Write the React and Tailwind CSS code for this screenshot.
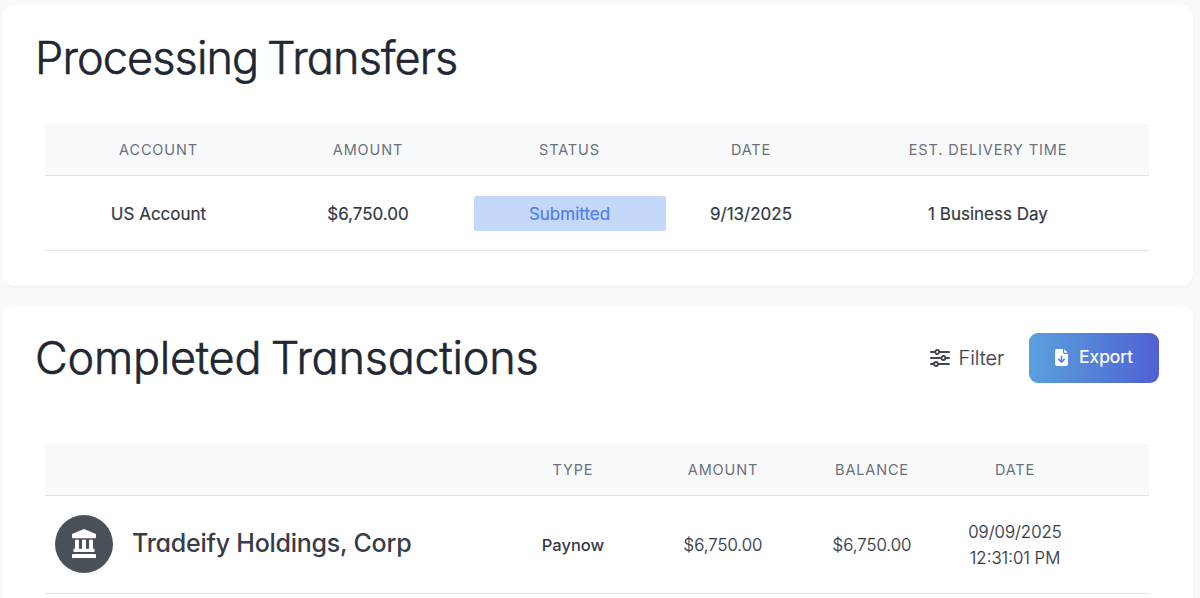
import React from 'react';

const transfers = [
    { id: 1, account: 'US Account', amount: '$6,750.00', status: 'Submitted', date: '9/13/2025', delivery: '1 Business Day' },
];

const transactions = [
    { id: 1, name: 'Tradeify Holdings, Corp', type: 'Paynow', amount: '$6,750.00', balance: '$6,750.00', date: '09/09/2025', time: '12:31:01 PM' },
];

function FilterIcon() {
    return (
        <svg width="20" height="18" viewBox="0 0 20 18" fill="none" stroke="currentColor" strokeWidth="2" strokeLinecap="round">
            <path d="M1 3h4M9.4 3H19M1 9h10.2M15.6 9H19M1 15h3M8.2 15H19" />
            <circle cx="7.2" cy="3" r="2" strokeWidth="1.8" />
            <circle cx="13.4" cy="9" r="2" strokeWidth="1.8" />
            <circle cx="6" cy="15" r="2" strokeWidth="1.8" />
        </svg>
    );
}

function FileDownloadIcon() {
    return (
        <svg width="13" height="17" viewBox="0 0 13 17">
            <path d="M2 0h6v3.6c0 .8.6 1.4 1.4 1.4H13v10a2 2 0 0 1-2 2H2a2 2 0 0 1-2-2V2a2 2 0 0 1 2-2z" fill="#fff" />
            <path d="M9.2 0.2 12.8 3.8H9.2z" fill="#fff" />
            <path d="M6.5 7.2v5.6M3.8 10.4l2.7 2.7 2.7-2.7" fill="none" stroke="#5585d8" strokeWidth="1.6" strokeLinecap="round" strokeLinejoin="round" />
        </svg>
    );
}

function BankIcon() {
    return (
        <svg width="24" height="30" viewBox="0 0 24 30" fill="#fff">
            <path d="M12 0 23.4 4.8q.6.3.6.9v2.5q0 1-1 1H1q-1 0-1-1V5.7q0-.6.6-.9z" />
            <path d="M3 10.8h4V20H3zM10 10.8h4V20h-4zM17 10.8h4V20h-4z" />
            <path d="M1.5 19.8h21V23h-21zM1 25h22q1 0 1 1v3H0v-3q0-1 1-1z" />
        </svg>
    );
}

function Th({ children }) {
    return (
        <th className="h-[51px] p-0 pt-px text-center text-[14.5px] font-normal tracking-[0.85px] text-[#6b717a]">{children}</th>
    );
}

function ProcessingTransfers() {
    return (
        <section className="h-[281px] shrink-0 rounded-xl bg-white pl-[43px] pr-[44px] pt-[23px] shadow-[0_1px_2px_rgba(0,0,0,0.05)]">
            <h2 className="-ml-[10px] h-[60px] whitespace-nowrap text-[45px] leading-[60px] font-light tracking-[-0.88px] text-[#1f2733] [-webkit-text-stroke:0.6px_#1f2733] [font-feature-settings:'cv11'] [word-spacing:-3px]">
                Processing Transfers
            </h2>
            <table className="mt-[36px] w-[1104px] table-fixed border-collapse">
                <colgroup>
                    <col className="w-[227px]" />
                    <col className="w-[192px]" />
                    <col className="w-[211px]" />
                    <col className="w-[152px]" />
                    <col className="w-[322px]" />
                </colgroup>
                <thead className="border-b border-[#e2e4e8] bg-[#f8f9fb]">
                    <tr>
                        <Th>ACCOUNT</Th>
                        <Th>AMOUNT</Th>
                        <Th>STATUS</Th>
                        <Th>DATE</Th>
                        <Th>EST. DELIVERY TIME</Th>
                    </tr>
                </thead>
                <tbody>
                    {transfers.map(t => (
                        <tr key={t.id} className="h-[75px] border-b border-[#e2e4e8] text-center text-[17px] text-[#333944] [-webkit-text-stroke:0.2px] *:pt-[5px]">
                            <td>{t.account}</td>
                            <td>{t.amount}</td>
                            <td className="pt-px!">
                                <div className="mx-auto h-[35px] w-[192px] rounded-[2px] bg-[#c4d9fa] leading-[37px] text-[#4f7ce8]">{t.status}</div>
                            </td>
                            <td>{t.date}</td>
                            <td>{t.delivery}</td>
                        </tr>
                    ))}
                </tbody>
            </table>
        </section>
    );
}

function CompletedTransactions() {
    return (
        <section className="h-[330px] shrink-0 rounded-xl bg-white pl-[43px] pr-[34px] pt-[23px] shadow-[0_1px_2px_rgba(0,0,0,0.05)]">
            <div className="-ml-[10px] flex h-[60px] items-center justify-between">
                <h2 className="whitespace-nowrap text-[45px] leading-[60px] font-light tracking-[-0.26px] text-[#1f2733] [-webkit-text-stroke:0.6px_#1f2733] [font-feature-settings:'cv11'] [word-spacing:-3px]">
                    Completed Transactions
                </h2>
                <div className="flex items-center gap-[25px] pb-px">
                    <button className="flex items-center gap-[9px] text-[20px] font-light tracking-[-0.1px] text-[#3f4650] [-webkit-text-stroke:0.2px]">
                        <FilterIcon />
                        <span>Filter</span>
                    </button>
                    <button className="flex h-[50px] w-[130px] items-center justify-center gap-[11px] rounded-[9px] bg-linear-to-r from-[#5aa0db] to-[#5060d2] text-[17.5px] text-white [-webkit-text-stroke:0.2px]">
                        <FileDownloadIcon />
                        <span>Export</span>
                    </button>
                </div>
            </div>
            <table className="mt-[56px] w-[1104px] table-fixed border-collapse">
                <colgroup>
                    <col className="w-[452px]" />
                    <col className="w-[152px]" />
                    <col className="w-[148px]" />
                    <col className="w-[150px]" />
                    <col className="w-[136px]" />
                    <col className="w-[66px]" />
                </colgroup>
                <thead className="border-b border-[#e2e4e8] bg-[#f8f9fb]">
                    <tr>
                        <Th />
                        <Th>TYPE</Th>
                        <Th>AMOUNT</Th>
                        <Th>BALANCE</Th>
                        <Th>DATE</Th>
                        <Th />
                    </tr>
                </thead>
                <tbody>
                    {transactions.map(t => (
                        <tr key={t.id} className="h-[98px] border-b border-[#e2e4e8] text-center text-[16.8px] font-light text-[#333944] [-webkit-text-stroke:0.2px]">
                            <td>
                                <div className="flex items-center gap-[19px] pl-[10px]">
                                    <div className="flex size-[58px] items-center justify-center rounded-full bg-[#495057]">
                                        <BankIcon />
                                    </div>
                                    <span className="whitespace-nowrap text-[25px] font-medium tracking-[-0.25px] text-[#373d49] [-webkit-text-stroke:0px] [font-feature-settings:'cv11']">{t.name}</span>
                                </div>
                            </td>
                            <td className="pt-[3px] text-[16.5px] font-medium [-webkit-text-stroke:0px]">{t.type}</td>
                            <td className="pt-[3px]">{t.amount}</td>
                            <td className="pt-[3px]">{t.balance}</td>
                            <td className="pt-[2px] leading-[26px]">
                                {t.date}
                                <br />
                                {t.time}
                            </td>
                            <td />
                        </tr>
                    ))}
                </tbody>
            </table>
        </section>
    );
}

export default function App() {
    return (
        <div className="flex h-[598px] w-[1200px] flex-col gap-[19px] overflow-hidden bg-[#f8f9fb] pl-[2px] pr-[7px] pt-[5px] font-['Inter',sans-serif]">
            <ProcessingTransfers />
            <CompletedTransactions />
        </div>
    );
}
